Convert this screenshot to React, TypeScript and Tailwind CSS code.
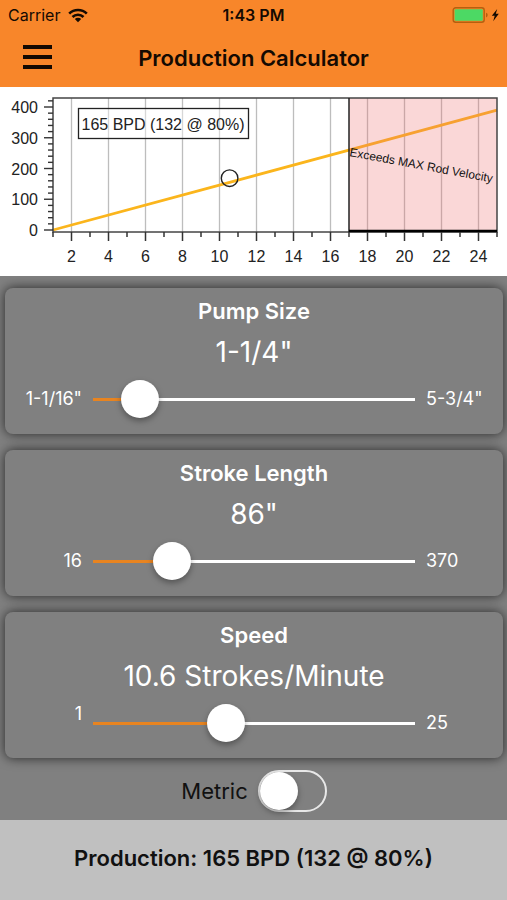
import { useState } from "react";

const PUMP_SIZES = [
  { label: '1-1/16"', inches: 1.0625 },
  { label: '1-1/4"', inches: 1.25 },
  { label: '1-1/2"', inches: 1.5 },
  { label: '1-3/4"', inches: 1.75 },
  { label: '2"', inches: 2 },
  { label: '2-1/4"', inches: 2.25 },
  { label: '2-1/2"', inches: 2.5 },
  { label: '2-3/4"', inches: 2.75 },
  { label: '3-1/4"', inches: 3.25 },
  { label: '3-3/4"', inches: 3.75 },
  { label: '5-3/4"', inches: 5.75 },
];

const STROKES = [
  16, 54, 64, 74, 86, 100, 120, 144, 168, 192, 216, 240, 260, 280, 288, 300,
  306, 320, 336, 370,
];

const MIN_SPEED = 1;
const MAX_SPEED = 25;
const MAX_ROD_SPEED = 17;

// plot area inside the svg
const LEFT = 53;
const RIGHT = 497;
const TOP = 11;
const BOTTOM = 145;
const ZERO = 143;
const FULL = 123; // height of the largest labelled tick

function StatusBar() {
  return (
    <div className="grid grid-cols-3 items-center px-2 h-[30px] text-base">
      <div className="flex items-center gap-2">
        <span>Carrier</span>
        <svg width="20" height="15" viewBox="0 0 20 15" aria-hidden="true">
          <g fill="none" stroke="#140a02" strokeWidth="2.6">
            <path d="M1.2 5.6a12.4 12.4 0 0 1 17.6 0" />
            <path d="M4.5 9a7.8 7.8 0 0 1 11 0" />
          </g>
          <path d="M10 14.2 6.8 11a4.5 4.5 0 0 1 6.4 0Z" fill="#140a02" />
        </svg>
      </div>
      <span className="text-center font-semibold">1:43 PM</span>
      <div className="flex justify-end">
        <svg width="48" height="18" viewBox="0 0 48 18" aria-hidden="true">
          <rect x="2.2" y="1.8" width="31" height="14.4" rx="2.5" fill="none" stroke="#b5600f" strokeWidth="1.4" />
          <rect x="3.6" y="3.2" width="28.2" height="11.6" rx="1" fill="#4cd964" />
          <path d="M35 6.8a2.4 2.4 0 0 1 0 4.6Z" fill="#b5600f" />
          <path d="M46.2 3 40.8 9.8h2.9l-1.5 5.4 5.6-7.4h-3Z" fill="#140a02" />
        </svg>
      </div>
    </div>
  );
}

interface ChartProps {
  speed: number;
  production: number;
  max: number;
  label: string;
}

function ProductionChart({ speed, production, max, label }: ChartProps) {
  const step = Math.max(100, Math.ceil(max / 450) * 100);
  const top = step * 4;
  const toX = (v: number) =>
    LEFT + ((v - MIN_SPEED) / (MAX_SPEED - MIN_SPEED)) * (RIGHT - LEFT);
  const toY = (v: number) => ZERO - (v / top) * FULL;

  const xTicks = Array.from({ length: 25 }, (_, i) => i + 1);
  const yTicks = Array.from({ length: 22 }, (_, i) => (i * step) / 5);

  return (
    <svg
      viewBox="0 0 507 189"
      className="block w-full bg-white font-['Liberation_Sans',sans-serif]"
      role="img"
      aria-label="Production by strokes per minute"
    >
      {xTicks
        .filter((x) => x % 2 === 0)
        .map((x) => (
          <line key={x} x1={toX(x)} x2={toX(x)} y1={TOP} y2={BOTTOM} stroke="#bdbdbd" strokeWidth="1.3" />
        ))}

      <line x1={toX(MIN_SPEED)} y1={toY(0)} x2={toX(MAX_SPEED)} y2={toY(max)} stroke="#fbb51c" strokeWidth="2.8" />

      <rect
        x={toX(MAX_ROD_SPEED)}
        y={TOP}
        width={RIGHT - toX(MAX_ROD_SPEED)}
        height={ZERO - TOP}
        fill="#ee6a6a"
        fillOpacity="0.27"
      />

      <rect x={LEFT} y={TOP} width={RIGHT - LEFT} height={BOTTOM - TOP} fill="none" stroke="#444" strokeWidth="1.5" />
      <line x1={toX(MAX_ROD_SPEED)} x2={toX(MAX_ROD_SPEED)} y1={TOP} y2={BOTTOM} stroke="#222" strokeWidth="1.5" />
      <line x1={toX(MAX_ROD_SPEED)} x2={RIGHT} y1="144" y2="144" stroke="#000" strokeWidth="2.6" />

      {xTicks.map((x) => (
        <line
          key={x}
          x1={toX(x)}
          x2={toX(x)}
          y1={BOTTOM}
          y2={x % 2 === 0 ? 154 : 150}
          stroke="#333"
          strokeWidth="1.5"
        />
      ))}
      {yTicks.map((y, i) => (
        <line
          key={y}
          x1={i % 5 === 0 ? 44 : 48}
          x2={LEFT}
          y1={toY(y)}
          y2={toY(y)}
          stroke="#333"
          strokeWidth="1.4"
        />
      ))}

      <g fill="#222" fontSize="16">
        {xTicks
          .filter((x) => x % 2 === 0)
          .map((x) => (
            <text key={x} x={toX(x)} y="175" textAnchor="middle">
              {x}
            </text>
          ))}
        {[0, 1, 2, 3, 4].map((i) => (
          <text key={i} x="38" y={toY(i * step) + 6} textAnchor="end">
            {i * step}
          </text>
        ))}
      </g>

      <rect x="78.5" y="21.5" width="170" height="30" fill="#fff" fillOpacity="0.4" stroke="#222" strokeWidth="1.3" />
      <text x="163" y="43" textAnchor="middle" fontSize="16" fill="#222">
        {label}
      </text>

      <text
        x={toX(MAX_ROD_SPEED)}
        y="69"
        fontSize="12"
        fill="#111"
        transform={`rotate(10.5 ${toX(MAX_ROD_SPEED)} 69)`}
      >
        Exceeds MAX Rod Velocity
      </text>

      <circle cx={toX(speed) - 1} cy={toY(production) - 1} r="8.3" fill="none" stroke="#222" strokeWidth="1.4" />
    </svg>
  );
}

interface SliderCardProps {
  id: string;
  title: string;
  display: string;
  minLabel: string;
  maxLabel: string;
  min: number;
  max: number;
  step: number;
  value: number;
  raised?: boolean;
  onChange: (value: number) => void;
}

function SliderCard(props: SliderCardProps) {
  const { id, title, display, minLabel, maxLabel, min, max, step, value, raised, onChange } = props;
  const percent = ((value - min) / (max - min)) * 100;

  return (
    <section className="rounded-lg bg-[#808080] pt-2 pb-4 text-white shadow-[0_0_12px_rgba(0,0,0,0.7)]">
      <label htmlFor={id} className="block text-center text-[22px] leading-[30px] font-semibold">
        {title}
      </label>
      <output htmlFor={id} className="mt-[6px] block text-center text-[28px] leading-10">
        {display}
      </output>
      <div className="mt-2 grid grid-cols-[77px_1fr_77px] items-center gap-x-[11px] text-lg">
        <span className={raised ? "self-start text-right leading-5" : "text-right"}>{minLabel}</span>
        <input
          id={id}
          type="range"
          min={min}
          max={max}
          step={step}
          value={value}
          onChange={(e) => onChange(Number(e.target.value))}
          style={{
            backgroundImage: `linear-gradient(to right, #e88420 ${percent}%, #fff ${percent}%)`,
          }}
          className="h-[38px] w-full min-w-0 cursor-pointer appearance-none bg-[length:100%_3px] bg-center bg-no-repeat [&::-webkit-slider-thumb]:size-[38px] [&::-webkit-slider-thumb]:appearance-none [&::-webkit-slider-thumb]:rounded-full [&::-webkit-slider-thumb]:bg-white [&::-webkit-slider-thumb]:shadow-[0_3px_6px_rgba(0,0,0,0.35)]"
        />
        <span>{maxLabel}</span>
      </div>
    </section>
  );
}

export default function App() {
  const [pump, setPump] = useState(1);
  const [stroke, setStroke] = useState(4);
  const [speed, setSpeed] = useState(10.6);
  const [metric, setMetric] = useState(false);

  const perStroke = 0.116 * PUMP_SIZES[pump].inches ** 2 * STROKES[stroke];
  const factor = metric ? 0.159 : 1;
  const production = perStroke * speed * factor;
  const unit = metric ? "m³/d" : "BPD";
  const label = `${Math.round(production)} ${unit} (${Math.round(production * 0.8)} @ 80%)`;

  const showLength = (inches: number) =>
    metric ? `${Math.round(inches * 2.54)} cm` : `${inches}"`;

  return (
    <div className="flex min-h-screen flex-col bg-[#808080] font-['Inter',sans-serif]">
      <header className="bg-[#f8862a] text-[#140a02]">
        <StatusBar />
        <div className="grid grid-cols-[52px_1fr_52px] items-center h-[57px]">
          <button type="button" aria-label="Menu" className="flex flex-col gap-[6px] pb-1 pl-[23px]">
            <span className="h-1 w-[29px] bg-current" />
            <span className="h-1 w-[29px] bg-current" />
            <span className="h-1 w-[29px] bg-current" />
          </button>
          <h1 className="text-center text-[22px] font-semibold">Production Calculator</h1>
        </div>
      </header>

      <ProductionChart
        speed={speed}
        production={production}
        max={perStroke * MAX_SPEED * factor}
        label={label}
      />

      <main className="flex flex-col gap-4 overflow-hidden pr-1 pl-[5px] pt-3">
        <SliderCard
          id="pump"
          title="Pump Size"
          display={PUMP_SIZES[pump].label}
          minLabel={PUMP_SIZES[0].label}
          maxLabel={PUMP_SIZES[PUMP_SIZES.length - 1].label}
          min={0}
          max={PUMP_SIZES.length - 1}
          step={1}
          value={pump}
          onChange={setPump}
        />
        <SliderCard
          id="stroke"
          title="Stroke Length"
          display={showLength(STROKES[stroke])}
          minLabel="16"
          maxLabel="370"
          min={0}
          max={STROKES.length - 1}
          step={1}
          value={stroke}
          onChange={setStroke}
        />
        <SliderCard
          id="speed"
          title="Speed"
          display={`${speed} Strokes/Minute`}
          minLabel="1"
          maxLabel="25"
          min={MIN_SPEED}
          max={MAX_SPEED}
          step={0.1}
          value={speed}
          raised
          onChange={setSpeed}
        />
        <div className="-mt-1 flex items-center justify-center gap-[10px] pb-2">
          <label htmlFor="metric" className="text-[22px] text-[#111]">
            Metric
          </label>
          <input
            id="metric"
            type="checkbox"
            role="switch"
            checked={metric}
            onChange={(e) => setMetric(e.target.checked)}
            className="flex h-[42px] w-[69px] cursor-pointer appearance-none items-center rounded-full border-2 border-[#e8e8e8] before:size-[38px] before:rounded-full before:bg-white before:shadow-[0_3px_6px_rgba(0,0,0,0.35)] checked:justify-end checked:bg-[#f98629]"
          />
        </div>
      </main>

      <footer className="flex grow items-center justify-center bg-[#c0c0c0] pt-5 pb-6">
        <p className="text-center text-[22px] font-semibold text-[#111]">Production: {label}</p>
      </footer>
    </div>
  );
}
